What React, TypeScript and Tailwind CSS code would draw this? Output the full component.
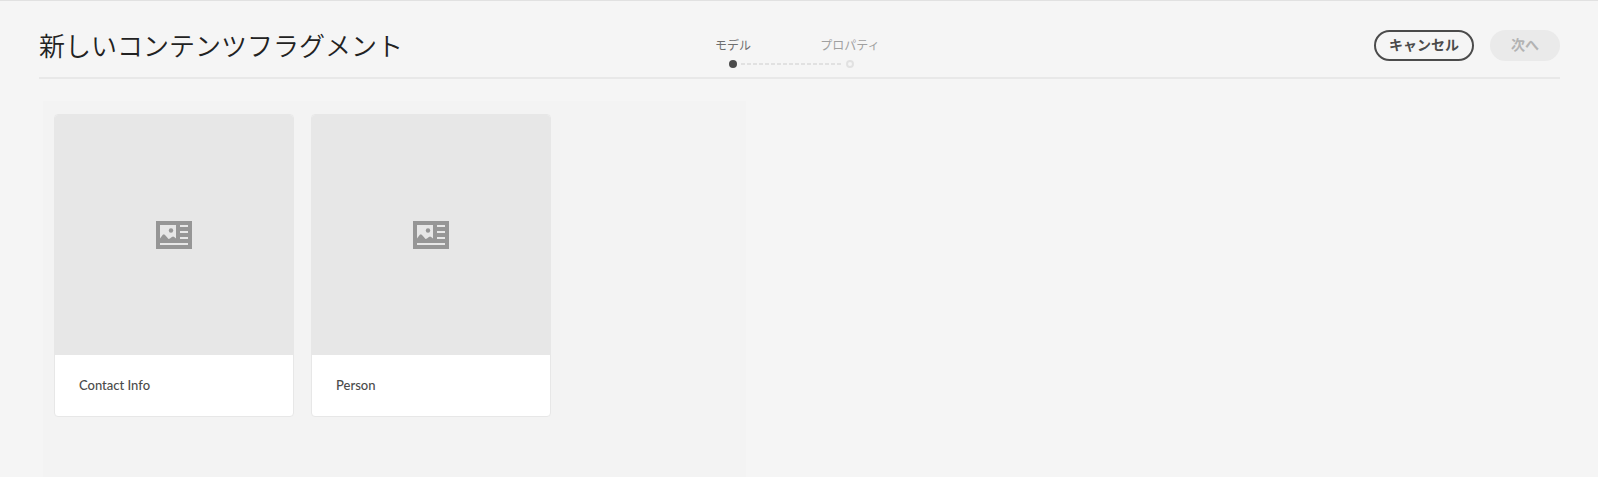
import React from "react";

type Step = { label: string; active: boolean };

const steps: Step[] = [
  { label: "モデル", active: true },
  { label: "プロパティ", active: false },
];

const models: string[] = ["Contact Info", "Person"];

function FragmentIcon() {
  return (
    <svg viewBox="0 0 36 28" className="h-7 w-9" aria-hidden="true">
      <rect width="36" height="28" fill="#969696" />
      <path
        fill="#e7e7e7"
        d="M4 4H20V17.5L18.2 16 17 15.5 15.5 16.2 14 17.5 12.5 18 9.5 14.5 8 13.2 6.8 13.8 4 17.5Z"
      />
      <circle cx="15" cy="9.5" r="2.2" fill="#969696" />
      <path fill="#e7e7e7" d="M24 4h8v2h-8zM24 10h8v2h-8zM24 16h8v2h-8zM4 22h28v2H4z" />
    </svg>
  );
}

function Stepper() {
  return (
    <ol className="flex">
      {steps.map((step, i) => (
        <li
          key={step.label}
          aria-current={step.active ? "step" : undefined}
          className="relative flex w-[117px] flex-col items-center gap-[7px]"
        >
          <span
            className={
              step.active
                ? "text-[12px] leading-4 text-[#6e6e6e]"
                : "text-[12px] leading-4 text-[#a0a0a0]"
            }
          >
            {step.label}
          </span>
          <span
            className={
              step.active
                ? "size-2 rounded-full bg-[#4b4b4b]"
                : "size-2 rounded-full border-2 border-[#e1e1e1]"
            }
          />
          {i < steps.length - 1 && (
            <span className="absolute bottom-[3px] left-1/2 ml-2 h-[2px] w-[102px] bg-[repeating-linear-gradient(90deg,#e1e1e1_0px,#e1e1e1_4px,transparent_4px,transparent_6px)]" />
          )}
        </li>
      ))}
    </ol>
  );
}

export default function App() {
  return (
    <div className="flex min-h-screen flex-col border-t border-[#e1e1e1] bg-[#f5f5f5] font-['Noto_Sans_CJK_JP',sans-serif]">
      <header className="mr-[38px] ml-[39px] grid h-[78px] grid-cols-[1fr_auto_1fr] items-center border-b-2 border-[#e8e8e8] pt-3">
        <h1 className="text-[26px] leading-8 font-[350] text-[#222]">
          新しいコンテンツフラグメント
        </h1>
        <div className="mr-4 pt-[15px]">
          <Stepper />
        </div>
        <div className="flex justify-end gap-4 pt-px">
          <button
            type="button"
            className="h-[31px] rounded-full border-2 border-[#4b4b4b] px-[13px] pb-1 text-[14px] leading-4 font-bold text-[#4b4b4b]"
          >
            キャンセル
          </button>
          <button
            type="button"
            disabled
            className="h-[31px] rounded-full bg-[#eaeaea] px-[21px] pb-1 text-[14px] leading-4 font-bold text-[#b3b3b3]"
          >
            次へ
          </button>
        </div>
      </header>
      <main className="mt-[22px] ml-[43px] flex w-[44%] grow items-start gap-[17px] bg-[#f3f3f3] px-[11px] py-[13px]">
        {models.map((name) => (
          <article
            key={name}
            className="w-[240px] overflow-hidden rounded border border-[#e7e7e7] bg-white"
          >
            <div className="flex h-[240px] items-center justify-center bg-[#e7e7e7]">
              <FragmentIcon />
            </div>
            <h2 className="px-6 pt-5 pb-[21px] font-['Lato','Noto_Sans_CJK_JP',sans-serif] text-[13px] leading-5 font-medium text-[#4b4b4b]">
              {name}
            </h2>
          </article>
        ))}
      </main>
    </div>
  );
}
